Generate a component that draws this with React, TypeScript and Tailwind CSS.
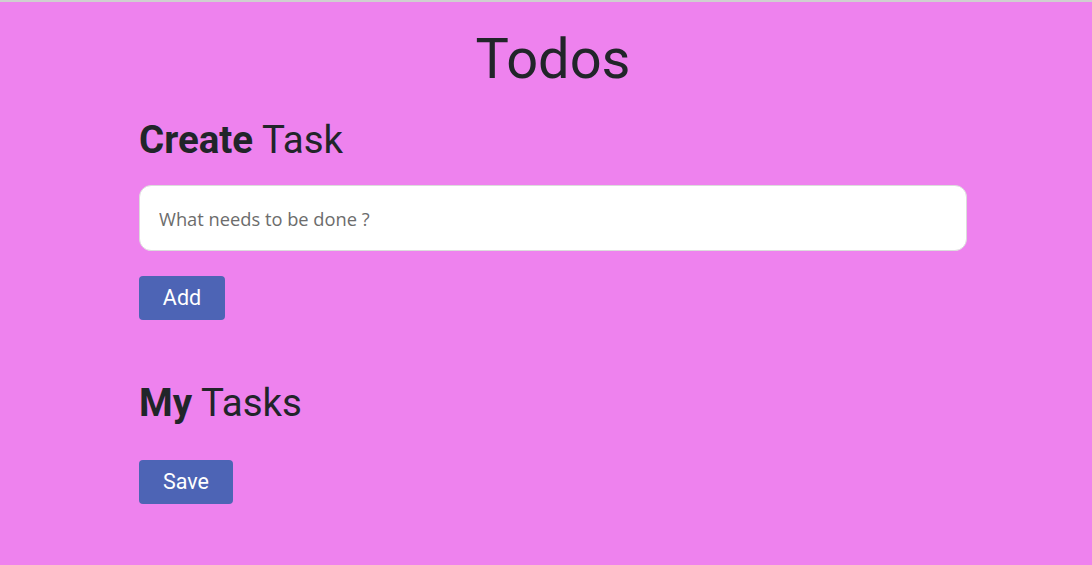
import React from 'react';

const App = () => {
  return (
    <div className="min-h-[565px] bg-[#ee82ee] border-t-2 border-[#cfcfcf] text-[#212529] font-['Roboto',sans-serif]">
      <div className="ml-[139px] w-[828px] pt-[29px]">
        <h1 className="text-center text-[56px] leading-[56px] font-normal">Todos</h1>

        <h2 className="mt-[30px] text-[38.5px] leading-[46px]">
          <span className="font-bold">Create</span> Task
        </h2>

        <input
          type="text"
          placeholder="What needs to be done ?"
          className="mt-[22px] block w-full h-[66px] rounded-[12px] border border-[#dcdcdc] bg-white px-[19px] text-[18.3px] font-['Open_Sans',sans-serif] placeholder:text-[#6c6c6c] outline-none"
        />

        <button className="mt-[25px] block w-[86px] h-[44px] rounded-[4px] bg-[#4d64b5] text-white text-[21.5px] pt-[1px]">
          Add
        </button>

        <h2 className="mt-[60px] text-[38.5px] leading-[46px]">
          <span className="font-bold">My</span> Tasks
        </h2>

        <button className="mt-[34px] block w-[94px] h-[44px] rounded-[4px] bg-[#4d64b5] text-white text-[21.5px] pt-[1px]">
          Save
        </button>
      </div>
    </div>
  );
};

export default App;
